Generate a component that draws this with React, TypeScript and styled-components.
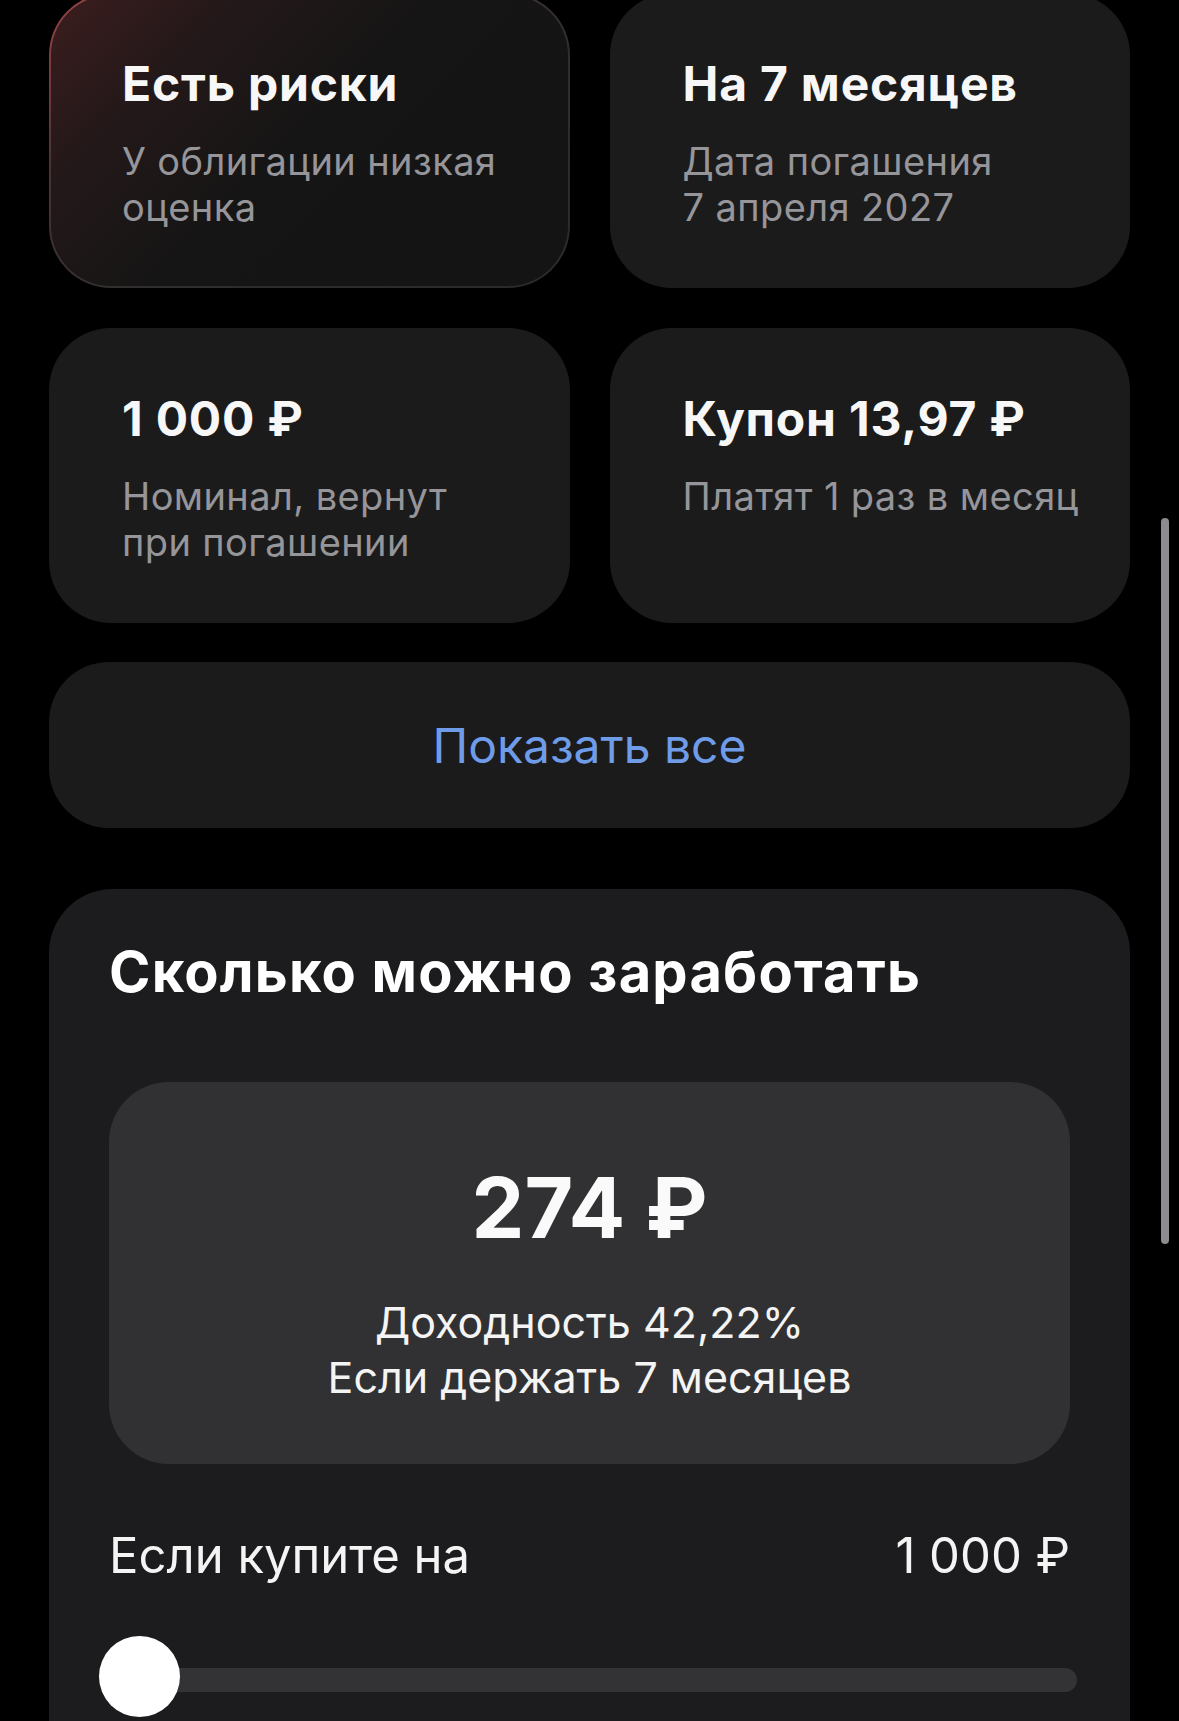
import React from 'react';
import styled, {createGlobalStyle} from 'styled-components';

interface Fact {
  title: string;
  note: string;
  risk?: boolean;
}

const facts: Fact[] = [
  {title: 'Есть риски', note: 'У облигации низкая\nоценка', risk: true},
  {title: 'На 7 месяцев', note: 'Дата погашения\n7 апреля 2027'},
  {title: '1 000 ₽', note: 'Номинал, вернут\nпри погашении'},
  {title: 'Купон 13,97 ₽', note: 'Платят 1 раз в месяц'},
];

const GlobalStyle = createGlobalStyle`
  html, body {
    margin: 0;
    padding: 0;
    background: #000;
    overflow: hidden;
  }
  body {
    font-family: Inter, "Noto Sans", sans-serif;
    color: #fff;
    -webkit-font-smoothing: antialiased;
  }
`

const Page = styled.div`
  width: 1179px;
  height: 1721px;
  box-sizing: border-box;
  padding: 0 49px;
  overflow: hidden;
`

const FactsGrid = styled.div`
  display: grid;
  grid-template-columns: 1fr 1fr;
  gap: 40px;
  margin-top: -7px;
`

const FactCard = styled.div<{ $risk?: boolean }>`
  height: 295px;
  box-sizing: border-box;
  border-radius: 62px;
  padding: 63px 30px 0 73px;
  border: 2px solid transparent;
  background: ${p => p.$risk
    ? `linear-gradient(135deg, #3c1d1e 0%, #231819 24%, #161515 48%, #141414 100%) padding-box,
       linear-gradient(150deg, #9a4443 0%, #4a3232 30%, #2e2e2e 60%, #2a2a2a 100%) border-box`
    : '#1b1b1c'};
`

const FactTitle = styled.div`
  font-size: 48px;
  line-height: 56px;
  font-weight: 700;
  letter-spacing: 0.8px;
  color: #f7f7f7;
  white-space: nowrap;
  margin-left: -2px;
  margin-top: -2px;
`

const FactNote = styled.div`
  margin-top: 26px;
  margin-left: -2px;
  font-size: 38px;
  line-height: 46px;
  letter-spacing: 0.4px;
  color: #95959a;
  white-space: pre-line;
`

const ShowAllButton = styled.div`
  margin-top: 39px;
  height: 166px;
  border-radius: 60px;
  background: #1b1b1c;
  display: flex;
  align-items: center;
  justify-content: center;
  font-size: 48px;
  color: #6f9ce8;
`

const EarnCard = styled.section`
  margin-top: 61px;
  background: #1c1c1e;
  border-radius: 64px;
  padding: 50px 60px 120px;
`

const EarnTitle = styled.h2`
  margin: 0;
  font-size: 56px;
  line-height: 66px;
  font-weight: 700;
  letter-spacing: 1.2px;
  color: #fff;
`

const ResultBox = styled.div`
  margin-top: 77px;
  height: 382px;
  box-sizing: border-box;
  border-radius: 60px;
  background: #313133;
  padding: 76px 20px 0;
  text-align: center;
`

const ResultAmount = styled.div`
  font-size: 84px;
  line-height: 100px;
  font-weight: 700;
  color: #fafafa;
`

const ResultNote = styled.div`
  margin-top: 37px;
  font-size: 43px;
  line-height: 55px;
  color: #f4f4f4;
`

const AmountRow = styled.div`
  margin-top: 62px;
  display: flex;
  justify-content: space-between;
  align-items: baseline;
  font-size: 49px;
  line-height: 60px;
  color: #f4f4f4;
  white-space: nowrap;
`

const Slider = styled.div`
  position: relative;
  margin: 50px -7px 0 -10px;
  height: 81px;
  display: flex;
  align-items: center;
`

const Track = styled.div`
  flex: 1;
  height: 24px;
  border-radius: 12px;
  background: #333335;
  margin-top: 6px;
`

const Thumb = styled.div`
  position: absolute;
  left: 0;
  top: 0;
  width: 81px;
  height: 81px;
  border-radius: 50%;
  background: #fff;
`

const ScrollIndicator = styled.div`
  position: fixed;
  left: 1161px;
  top: 518px;
  width: 8px;
  height: 726px;
  border-radius: 4px;
  background: #8c8c90;
`

export default function App() {
  return (
    <>
      <GlobalStyle/>
      <Page>
        <FactsGrid>
          {facts.map((f, i) => (
            <FactCard $risk={f.risk} key={`fact-${i}`}>
              <FactTitle>{f.title}</FactTitle>
              <FactNote>{f.note}</FactNote>
            </FactCard>
          ))}
        </FactsGrid>
        <ShowAllButton>Показать все</ShowAllButton>
        <EarnCard>
          <EarnTitle>Сколько можно заработать</EarnTitle>
          <ResultBox>
            <ResultAmount>274 ₽</ResultAmount>
            <ResultNote>
              Доходность 42,22%<br/>
              Если держать 7 месяцев
            </ResultNote>
          </ResultBox>
          <AmountRow>
            <span>Если купите на</span>
            <span>1 000 ₽</span>
          </AmountRow>
          <Slider>
            <Track/>
            <Thumb/>
          </Slider>
        </EarnCard>
      </Page>
      <ScrollIndicator/>
    </>
  );
}
